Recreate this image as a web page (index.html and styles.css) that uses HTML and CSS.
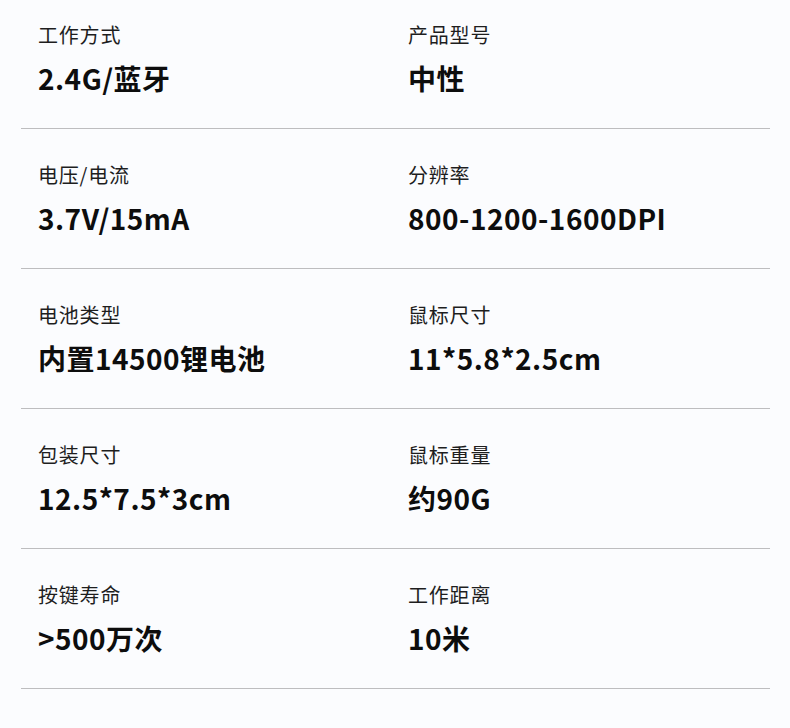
FILE: index.html
```html
<!DOCTYPE html>
<html lang="zh">
<head>
<meta charset="utf-8">
<link rel="stylesheet" href="styles.css">
</head>
<body>
<div class="specs">
  <div class="row">
    <div class="cell"><div class="label">工作方式</div><div class="value">2.4G/蓝牙</div></div>
    <div class="cell"><div class="label">产品型号</div><div class="value">中性</div></div>
  </div>
  <div class="row">
    <div class="cell"><div class="label">电压/电流</div><div class="value">3.7V/15mA</div></div>
    <div class="cell"><div class="label">分辨率</div><div class="value">800-1200-1600DPI</div></div>
  </div>
  <div class="row">
    <div class="cell"><div class="label">电池类型</div><div class="value">内置14500锂电池</div></div>
    <div class="cell"><div class="label">鼠标尺寸</div><div class="value">11*5.8*2.5cm</div></div>
  </div>
  <div class="row">
    <div class="cell"><div class="label">包装尺寸</div><div class="value">12.5*7.5*3cm</div></div>
    <div class="cell"><div class="label">鼠标重量</div><div class="value">约90G</div></div>
  </div>
  <div class="row">
    <div class="cell"><div class="label">按键寿命</div><div class="value">&gt;500万次</div></div>
    <div class="cell"><div class="label">工作距离</div><div class="value">10米</div></div>
  </div>
</div>
</body>
</html>
```

FILE: styles.css
```css
html, body {
  margin: 0;
  padding: 0;
  background: #fbfcfe;
}
body {
  font-family: "Noto Sans CJK SC", "Noto Sans", sans-serif;
  width: 790px;
  height: 728px;
  overflow: hidden;
}
.specs {
  margin: 0 20px 0 21px;
}
.row {
  display: grid;
  grid-template-columns: 370px 1fr;
  padding: 32px 0 32px 17px;
  border-bottom: 1px solid #bdbdbf;
}
.row:first-child {
  padding-top: 21px;
}
.label {
  font-size: 20px;
  line-height: 28px;
  letter-spacing: 0.8px;
  color: #1e1e1e;
  font-weight: 400;
}
.value {
  margin-top: 11px;
  font-size: 28px;
  line-height: 36px;
  letter-spacing: 0.5px;
  color: #0d0d0d;
  font-weight: 700;
}
```
